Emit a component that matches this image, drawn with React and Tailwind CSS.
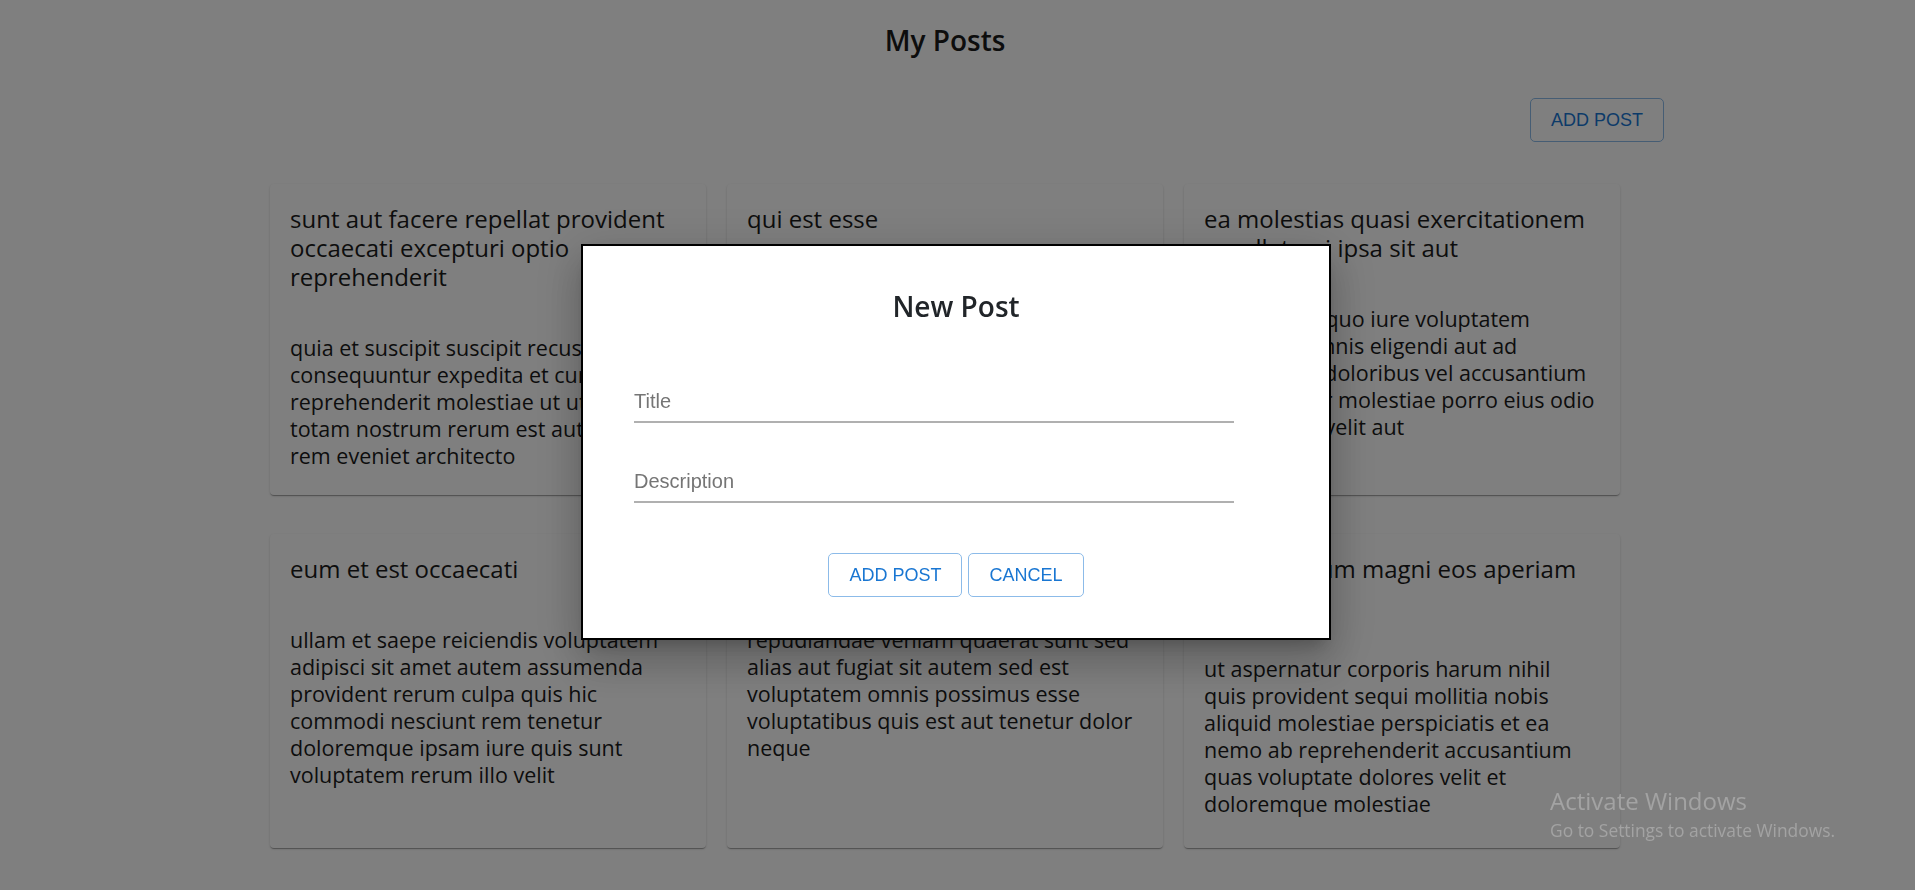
import React from 'react';

const posts = [
  {
    title: ['sunt aut facere repellat provident', 'occaecati excepturi optio', 'reprehenderit'],
    body: [
      'quia et suscipit suscipit recusandae',
      'consequuntur expedita et cum',
      'reprehenderit molestiae ut ut quas',
      'totam nostrum rerum est autem sunt',
      'rem eveniet architecto',
    ],
  },
  {
    title: ['qui est esse'],
    body: [
      'est rerum tempore vitae sequi sint',
      'nihil reprehenderit dolor beatae ea',
      'dolores neque fugiat blanditiis',
      'voluptate porro vel nihil molestiae ut',
      'reiciendis qui aperiam non debitis',
      'possimus qui neque nisi nulla',
    ],
  },
  {
    title: ['ea molestias quasi exercitationem', 'repellat qui ipsa sit aut'],
    body: [
      'et iusto sed quo iure voluptatem',
      'occaecati omnis eligendi aut ad',
      'voluptatem doloribus vel accusantium',
      'quis pariatur molestiae porro eius odio',
      'et labore et velit aut',
    ],
  },
  {
    title: ['eum et est occaecati'],
    body: [
      'ullam et saepe reiciendis voluptatem',
      'adipisci sit amet autem assumenda',
      'provident rerum culpa quis hic',
      'commodi nesciunt rem tenetur',
      'doloremque ipsam iure quis sunt',
      'voluptatem rerum illo velit',
    ],
  },
  {
    title: ['nesciunt quas odio'],
    body: [
      'repudiandae veniam quaerat sunt sed',
      'alias aut fugiat sit autem sed est',
      'voluptatem omnis possimus esse',
      'voluptatibus quis est aut tenetur dolor',
      'neque',
    ],
  },
  {
    title: ['dolorem eum magni eos aperiam', 'quia'],
    body: [
      'ut aspernatur corporis harum nihil',
      'quis provident sequi mollitia nobis',
      'aliquid molestiae perspiciatis et ea',
      'nemo ab reprehenderit accusantium',
      'quas voluptate dolores velit et',
      'doloremque molestiae',
    ],
  },
];

function OutlinedButton({ children }) {
  return (
    <button className="h-[44px] px-[20px] border border-[#8cbbe9] rounded-[5px] bg-white text-[#1976d2] text-[18px] leading-[42px] font-['Liberation_Sans',Arial,sans-serif] uppercase whitespace-nowrap">
      {children}
    </button>
  );
}

function PostCard({ post }) {
  return (
    <div className="bg-white rounded-[4px] shadow-[0_2px_1px_-1px_rgba(0,0,0,0.2),0_1px_1px_0_rgba(0,0,0,0.14),0_1px_3px_0_rgba(0,0,0,0.12)] px-5 pt-5 text-[#1a1a1a]">
      <h2 className="text-[24px] leading-[29px] whitespace-nowrap">
        {post.title.map((line) => (
          <span key={line} className="block">{line}</span>
        ))}
      </h2>
      <p className="mt-[43px] text-[21.5px] leading-[27px] whitespace-nowrap">
        {post.body.map((line) => (
          <span key={line} className="block">{line}</span>
        ))}
      </p>
    </div>
  );
}

function Field({ label }) {
  return (
    <div className="w-[600px]">
      <div className="text-[20px] leading-[24px] text-[#757575] font-['Liberation_Sans',Arial,sans-serif]">{label}</div>
      <div className="mt-[8px] h-[2px] bg-[#b0b0b0]" />
    </div>
  );
}

export default function App() {
  return (
    <div className="min-h-screen bg-white font-['Open_Sans',sans-serif] overflow-hidden">
      <div className="flex justify-center pr-[25px]">
        <div className="w-[1438px]">
          <h1 className="mt-[22px] text-center text-[28px] leading-[36px] font-semibold text-[#1a1a1a]">My Posts</h1>

          <div className="mt-[40px] flex justify-end">
            <OutlinedButton>Add Post</OutlinedButton>
          </div>

          <div className="mt-[42px] grid grid-cols-[repeat(3,436px)] grid-rows-[311px_314px] gap-x-[21px] gap-y-[39px] justify-center">
            {posts.map((post) => (
              <PostCard key={post.title[0]} post={post} />
            ))}
          </div>
        </div>
      </div>

      {/* backdrop + dialog */}
      <div className="fixed inset-0 bg-black/50 flex items-center justify-center">
        <div className="w-[750px] h-[396px] -mt-[6px] -ml-[3px] bg-white border-2 border-black shadow-[0_11px_15px_-7px_rgba(0,0,0,0.2),0_24px_38px_3px_rgba(0,0,0,0.14),0_9px_46px_8px_rgba(0,0,0,0.12)]">
          <h2 className="mt-[42px] text-center text-[28px] leading-[36px] font-semibold text-[#212529]">New Post</h2>
          <div className="pl-[51px] mt-[65px] flex flex-col gap-[46px]">
            <Field label="Title" />
            <Field label="Description" />
          </div>
          <div className="mt-[50px] flex justify-center gap-[6px]">
            <OutlinedButton>Add Post</OutlinedButton>
            <OutlinedButton>Cancel</OutlinedButton>
          </div>
        </div>
      </div>

      {/* windows watermark */}
      <div className="fixed top-[786px] right-[80px] text-[#a3a3a3] pointer-events-none">
        <div className="text-[24px] leading-[30px]">Activate Windows</div>
        <div className="mt-[3px] text-[17.4px] leading-[23px]">Go to Settings to activate Windows.</div>
      </div>
    </div>
  );
}
